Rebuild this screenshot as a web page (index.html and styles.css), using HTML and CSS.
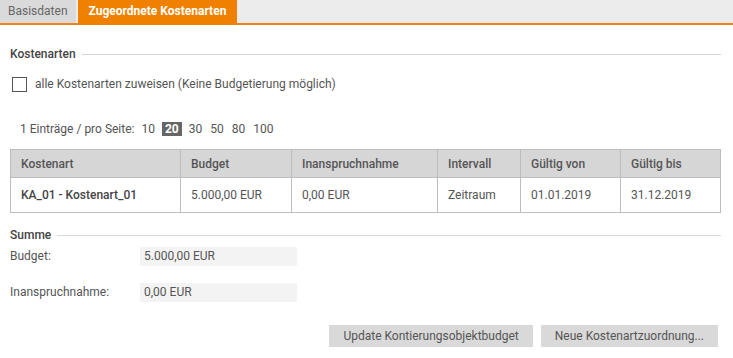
FILE: index.html
```html
<!DOCTYPE HTML>
<html>
<head>
  <title>Zugeordnete Kostenarten</title>
  <link rel="stylesheet" href="styles.css">
</head>
<body>
  <div class="tabs">
    <div class="tab">Basisdaten</div>
    <div class="tab active">Zugeordnete Kostenarten</div>
  </div>

  <div class="content">
    <div class="section-title"><span>Kostenarten</span></div>

    <label class="check-row">
      <span class="checkbox"></span>
      <span>alle Kostenarten zuweisen (Keine Budgetierung möglich)</span>
    </label>

    <div class="paging">
      <span>1 Einträge / pro Seite:</span>
      <span class="page">10</span>
      <span class="page current">20</span>
      <span class="page">30</span>
      <span class="page">50</span>
      <span class="page">80</span>
      <span class="page">100</span>
    </div>

    <table class="grid">
      <thead>
        <tr>
          <th class="c1">Kostenart</th>
          <th class="c2">Budget</th>
          <th class="c3">Inanspruchnahme</th>
          <th class="c4">Intervall</th>
          <th class="c5">Gültig von</th>
          <th class="c6">Gültig bis</th>
        </tr>
      </thead>
      <tbody>
        <tr>
          <td class="strong">KA_01 - Kostenart_01</td>
          <td>5.000,00 EUR</td>
          <td>0,00 EUR</td>
          <td>Zeitraum</td>
          <td>01.01.2019</td>
          <td>31.12.2019</td>
        </tr>
      </tbody>
    </table>

    <div class="section-title sum"><span>Summe</span></div>

    <div class="field">
      <div class="field-label">Budget:</div>
      <div class="field-value">5.000,00 EUR</div>
    </div>
    <div class="field">
      <div class="field-label">Inanspruchnahme:</div>
      <div class="field-value">0,00 EUR</div>
    </div>

    <div class="buttons">
      <button class="btn">Update Kontierungsobjektbudget</button>
      <button class="btn">Neue Kostenartzuordnung...</button>
    </div>
  </div>
</body>
</html>
```

FILE: styles.css
```css
body {
  margin: 0;
  font-family: Roboto, "Liberation Sans", sans-serif;
  font-size: 12px;
  color: #555;
  background: #fff;
}

.tabs {
  display: flex;
  height: 23px;
  background: #ececec;
  border-bottom: 2px solid #ee8419;
}
.tab {
  padding: 0 8px;
  line-height: 23px;
  background: #dadada;
  color: #666;
  margin-right: 2px;
}
.tab.active {
  background: #f08000;
  color: #fff;
  font-weight: bold;
  padding: 0 11px 0 11px;
  height: 25px;
  line-height: 23px;
}

.content {
  padding: 0 12px 0 10px;
}

.section-title {
  display: flex;
  align-items: center;
  margin-top: 21px;
  height: 16px;
  color: #444;
  font-weight: 500;
}
.section-title::after {
  content: "";
  flex: 1;
  border-top: 1px solid #d8d8d8;
  margin-left: 6px;
}
.section-title.sum {
  margin-top: 14px;
}

.check-row {
  display: flex;
  align-items: center;
  margin-top: 14px;
  margin-left: 2px;
  height: 16px;
  color: #555;
}
.checkbox {
  width: 13px;
  height: 13px;
  border: 1px solid #555;
  margin-right: 8px;
}

.paging {
  margin: 29px 0 0 10px;
  height: 16px;
  line-height: 16px;
}
.page {
  margin-left: 3px;
  padding: 0 1px;
}
.page.current {
  background: #666;
  color: #fff;
  font-weight: bold;
  padding: 0 3px;
}

.grid {
  border-collapse: collapse;
  width: 711px;
  margin-top: 12px;
}
.grid th,
.grid td {
  border: 1px solid #bdbdbd;
  text-align: left;
  padding: 0 10px;
  white-space: nowrap;
}
.grid th {
  background: #d6d6d6;
  height: 27px;
  font-weight: 500;
  color: #555;
}
.grid td {
  height: 34px;
}
.grid td.strong {
  font-weight: 500;
  color: #444;
}
.grid .c1 { width: 149px; }
.grid .c2 { width: 90px; }
.grid .c3 { width: 125px; }
.grid .c4 { width: 62px; }
.grid .c5 { width: 79px; }

.field {
  display: flex;
  align-items: center;
  margin-top: 3px;
  height: 20px;
}
.field + .field {
  margin-top: 16px;
}
.field-label {
  width: 130px;
}
.field-value {
  width: 153px;
  height: 19px;
  line-height: 19px;
  padding-left: 4px;
  background: #f3f3f3;
}

.buttons {
  display: flex;
  justify-content: flex-end;
  gap: 8px;
  margin-top: 23px;
  margin-right: 3px;
}
.btn {
  font-family: inherit;
  font-size: 12px;
  color: #555;
  background: #d9d9d9;
  border: none;
  height: 22px;
  padding: 0 14px;
}
```
